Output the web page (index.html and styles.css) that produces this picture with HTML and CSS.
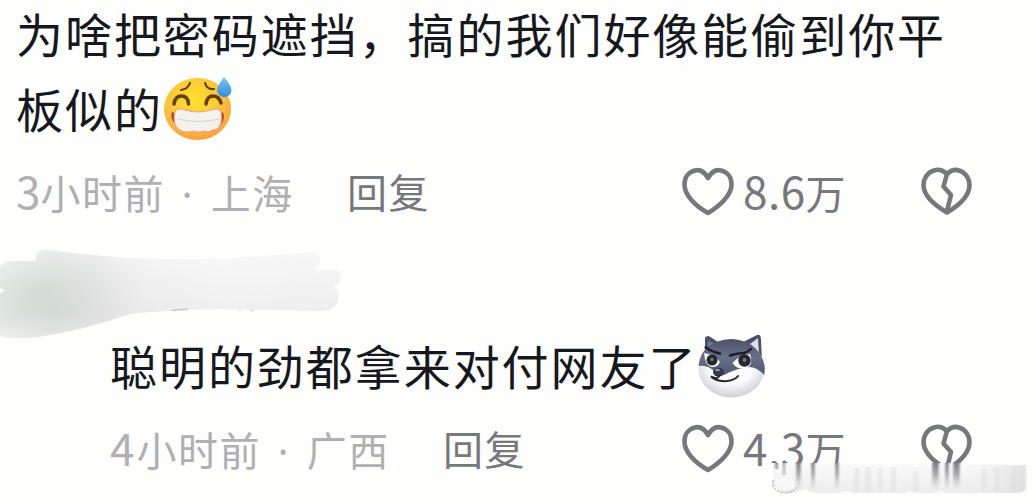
FILE: index.html
```html
<!DOCTYPE html>
<html lang="zh-CN">
  <head>
    <meta charset="UTF-8" />
    <meta name="viewport" content="width=device-width, initial-scale=1.0" />
    <title>评论</title>
    <link rel="stylesheet" href="styles.css">
  </head>
  <body>
    <!-- shared icons -->
    <svg width="0" height="0" class="defs">
      <symbol id="heart" viewBox="0 0 52 50">
        <path d="M26 11C22 4 17 2.500 13 3.500C6 5 2.500 11 2.500 17.500C2.500 28 13 39 26 46C38 39 49.500 28 49.500 17.500C49.500 11 46 5 39 3.500C35 2.500 30 4 26 11Z" />
      </symbol>
      <symbol id="broken" viewBox="0 0 52 50">
        <path d="M26 7C22 3 17 2 13 3.500C6 5.500 2.500 12 2.500 18C2.500 29 15 39 26 45.500C37 39 48.500 29 48.500 18C48.500 12 45 5.500 38 3.500C34 2 30 3 26 7Z" />
        <path d="M26 7L22.500 19.500L30 28L26 44" />
      </symbol>
    </svg>

    <main class="comments">
      <section class="comment">
        <p class="text">为啥把密码遮挡，搞的我们好像能偷到你平<br>板似的<svg class="emoji sweat" viewBox="0 0 70 66">
            <defs>
              <radialGradient id="face" cx="45%" cy="35%" r="65%">
                <stop offset="0" stop-color="#ffe02e" />
                <stop offset=".6" stop-color="#fdc63c" />
                <stop offset="1" stop-color="#f8a23e" />
              </radialGradient>
              <linearGradient id="drop" x1="0" y1="0" x2="0" y2="1">
                <stop offset="0" stop-color="#76c7f3" />
                <stop offset="1" stop-color="#318ddd" />
              </linearGradient>
            </defs>
            <ellipse cx="34.500" cy="33" rx="33.500" ry="31" fill="url(#face)" />
            <g fill="none" stroke="#654006" stroke-linecap="round">
              <path d="M18 14Q25 13 27 7M42 7Q44 14 51 13" stroke-width="2.200" />
              <path d="M11 28Q12 20 18.500 20Q25 20 25.500 28M43 28Q44 20 50 20Q56 20 58 27" stroke-width="3.500" />
            </g>
            <path d="M9 36Q7 42 12 48L20 53L50 53Q58 51 60 45Q62 38 59 36L50 42L20 42Z" fill="#a83c1f" />
            <path d="M13 34Q17 32 22 34Q29 36 35 36Q42 36 48 34Q56 31 58 36Q59 41 58 47Q56 54 50 54Q45 57 41 55Q35 57 30 55Q24 57 19 55Q14 54 12 48Q10 39 13 34Z" fill="#f3f2ed" stroke="#f5a08a" stroke-width="1.200" />
            <path d="M15 43Q35 48 56 43" fill="none" stroke="#d5d6d2" stroke-width="1.200" />
            <path d="M61 1Q54 10 54 14A7.200 7.200 0 0 0 68.500 14Q68 9 61 1Z" fill="url(#drop)" />
          </svg></p>
        <div class="meta">
          <span class="time"><span class="num">3</span>小时前 <span class="dot">·</span> 上海</span>
          <span class="reply">回复</span>
          <span class="like">
            <svg class="icon"><use href="#heart" /></svg>
            <span class="count"><span class="num">8.6</span>万</span>
          </span>
          <svg class="icon"><use href="#broken" /></svg>
        </div>
      </section>

      <!-- smudged user name -->
      <svg class="smudge" viewBox="0 0 345 95">
        <defs>
          <linearGradient id="paint">
            <stop offset="0" stop-color="#e1e8e1" />
            <stop offset=".15" stop-color="#d4dad6" />
            <stop offset=".25" stop-color="#dadcdb" />
            <stop offset=".42" stop-color="#ededed" />
            <stop offset=".65" stop-color="#f2f2f2" />
            <stop offset="1" stop-color="#f0f0f0" />
          </linearGradient>
          <linearGradient id="shade" x1="0" y1="0" x2="0" y2="1">
            <stop offset="0" stop-color="#fff" stop-opacity=".5" />
            <stop offset=".4" stop-color="#fff" stop-opacity=".1" />
            <stop offset=".7" stop-color="#ddd" stop-opacity=".15" />
            <stop offset="1" stop-color="#fff" stop-opacity=".4" />
          </linearGradient>
          <radialGradient id="tint">
            <stop offset="0" stop-color="#cbd9cd" stop-opacity=".8" />
            <stop offset="1" stop-color="#d5ddd6" stop-opacity="0" />
          </radialGradient>
          <path id="stroke" d="M0 19Q4 13 12 13H36V9Q38 1 46 2Q110 10 160 11Q230 12 312 4Q320 4 321 12Q319 18 312 22H335Q341 24 341 30Q340 37 333 38Q339 42 338 51Q337 62 322 63L220 61Q165 62 130 66Q90 80 45 88Q15 92 0 88V46L5 42L0 40Z" />
        </defs>
        <use href="#stroke" fill="url(#paint)" />
        <clipPath id="edge"><use href="#stroke" /></clipPath>
        <ellipse cx="40" cy="46" rx="60" ry="42" fill="url(#tint)" clip-path="url(#edge)" />
        <use href="#stroke" fill="url(#shade)" />
        <path d="M172 62.500L188 61" stroke="#b8b8b8" stroke-width="1.200" />
        <path d="M239 62.500H241M250 62.500H253" stroke="#ccc" />
      </svg>

      <section class="comment nested">
        <p class="text">聪明的劲都拿来对付网友了<svg class="emoji husky" viewBox="0 0 70 68">
            <defs>
              <linearGradient id="fur" x1="0" y1="0" x2="0" y2="1">
                <stop offset="0" stop-color="#4d5168" />
                <stop offset=".5" stop-color="#686f89" />
                <stop offset="1" stop-color="#505873" />
              </linearGradient>
              <radialGradient id="muzzle" cx="50%" cy="40%" r="60%">
                <stop offset=".6" stop-color="#fbfbfd" />
                <stop offset="1" stop-color="#d0cfd7" />
              </radialGradient>
            </defs>
            <path d="M8 30V6Q10 2 15 6L24 12M46 10L60 3Q64 2 64 8L65 31" fill="#4b506a" />
            <path d="M53 12L61 6L62 22Z" fill="#e0dee9" />
            <path d="M11 19V9L17 11Z" fill="#777990" />
            <ellipse cx="34.500" cy="36.500" rx="33" ry="29" fill="url(#muzzle)" />
            <path d="M1.500 34Q4 9 34 7Q58 8 66 28Q69 35 67 43Q60 35 52 35Q40 36 27 43Q19 44 16 38Q9 33 1.500 34Z" fill="url(#fur)" />
            <path d="M7 21Q18 23 23 30Q21 35 15 35Q8 34 7 21ZM35.500 31Q42 23 53 22Q57 35 47 36.500Q39 37 35.500 31Z" fill="#fafafa" />
            <circle cx="15" cy="28" r="5.500" fill="#252828" />
            <circle cx="47.500" cy="28.500" r="6.200" fill="#252828" />
            <circle cx="15" cy="27.500" r="1.700" fill="#777d7b" />
            <circle cx="47.500" cy="28" r="1.900" fill="#777d7b" />
            <path d="M8.500 15.500Q15 20 23 21.500M33 23.500Q41 21 47 21Q51 20 54 17" fill="none" stroke="#1e1c28" stroke-width="2.400" stroke-linecap="round" />
            <ellipse cx="21.500" cy="40" rx="5.500" ry="4.500" fill="#35384d" />
            <ellipse cx="20.500" cy="38" rx="2.500" ry="1.300" fill="#9296a7" />
            <path d="M22 44Q21 48 14 44.500Q20 50 30 49Q38 48 41 44" fill="none" stroke="#222029" stroke-width="2" stroke-linecap="round" />
          </svg></p>
        <div class="meta">
          <span class="time"><span class="num">4</span>小时前 <span class="dot">·</span> 广西</span>
          <span class="reply">回复</span>
          <span class="like">
            <svg class="icon"><use href="#heart" /></svg>
            <span class="count"><span class="num">4.3</span>万</span>
          </span>
          <svg class="icon"><use href="#broken" /></svg>
        </div>
      </section>
    </main>

    <!-- smeared strip over the bottom right corner -->
    <svg class="smear" viewBox="0 0 266 42">
      <defs>
        <linearGradient id="fade" x1="0" y1="0" x2="0" y2="1">
          <stop offset="0" stop-color="#fbfbfb" />
          <stop offset="1" stop-color="#ececec" />
        </linearGradient>
        <linearGradient id="streak" x1="0" y1="0" x2="0" y2="1">
          <stop offset="0" stop-color="#77787c" />
          <stop offset=".5" stop-color="#b4b4b7" />
          <stop offset="1" stop-color="#e5e5e5" stop-opacity=".2" />
        </linearGradient>
        <linearGradient id="tail">
          <stop offset="0" stop-color="#eee" stop-opacity="0" />
          <stop offset="1" stop-color="#d8d8d8" />
        </linearGradient>
        <filter id="soft" x="-10%" y="-5%" width="120%" height="110%">
          <feGaussianBlur stdDeviation="1.200 .4" />
        </filter>
      </defs>
      <path d="M0 0H266V42H0Z" fill="#fefefc" />
      <g filter="url(#soft)">
        <path d="M3 1H256V26Q252 31 246 30H181Q174 31 170 27Q166 31 158 30H150Q144 31 140 27Q136 31 130 30H82Q76 26 69 30H48Q41 30 35 26Q26 32 10 29L3 22Z" fill="url(#fade)" />
        <path d="M190 2H256V27Q250 30 240 30H190Z" fill="url(#tail)" opacity=".7" />
        <path d="M84 5H89V29H84ZM95 4H101V29H95ZM108 5H112V29H108ZM121 4H126V29H121ZM143 8H148V28H143ZM212 5H216V29H212ZM225 5H229V29H225ZM241 4H246V29H241Z" fill="#ddd" opacity=".5" />
        <path d="M5 -2H8V6H5ZM13 -2H15V12H13ZM26 -2H31V26H26ZM41 -2H45V28H41ZM65 -2H69V28H65ZM162 -2H169V28H162ZM175 -2H179V28H175ZM183 -2H190V28H183Z" fill="url(#streak)" />
      </g>
      <path d="M3 17V23Q6 29 15 30Q24 29 27 24" fill="none" stroke="#999" stroke-width=".8" stroke-dasharray="3 1" />
      <path d="M5 16H24V25Q15 29 6 24Z" fill="#fff" opacity=".6" />
    </svg>
  </body>
</html>
```
FILE: styles.css
```css
body {
  margin: 0;
  width: 1036px;
  height: 504px;
  overflow: hidden;
  position: relative;
  background: #fefefc;
  font-family: "Noto Sans CJK SC", sans-serif;
}

.defs {
  position: absolute;
}

.comments {
  display: flex;
  flex-direction: column;
  margin-top: -5px;
}

.comment {
  padding: 0 63px 0 16px;
}

.nested {
  padding-left: 110px;
}

.text {
  margin: 0;
  color: #161820;
  font-size: 47px;
  line-height: 75px;
  letter-spacing: 1.95px;
  white-space: nowrap;
}

.emoji {
  width: 70px;
  height: 66px;
  margin: -10px 0;
  vertical-align: -4px;
  overflow: visible;
}

.husky {
  height: 68px;
  vertical-align: -5px;
}

/* time, reply, likes */
.meta {
  display: flex;
  align-items: center;
  height: 94px;
  color: #77787c;
  font-size: 40px;
  line-height: 60px;
  letter-spacing: 1.5px;
  white-space: nowrap;
}

.time,
.reply,
.count {
  margin-top: -2px;
}

.time {
  width: 331px;
  color: #b0b0b2;
}

.nested .time {
  width: 333px;
}

.num {
  font-size: 44px;
  letter-spacing: 0;
}

.nested .time .num {
  letter-spacing: 2px;
}

.dot {
  display: inline-block;
  width: 25px;
  font-family: "Noto Sans", sans-serif;
  line-height: 1;
  text-align: center;
}

.like {
  display: flex;
  align-items: center;
  gap: 9px;
  margin-left: auto;
  width: 239px;
}

.count {
  letter-spacing: 0;
}

.count .num {
  letter-spacing: 0.5px;
}

.icon {
  width: 52px;
  height: 50px;
  flex: none;
  fill: none;
  stroke: #77787c;
  stroke-width: 4.6;
  stroke-linejoin: round;
}

.smudge {
  width: 345px;
  height: 95px;
  margin-top: 9px;
  margin-bottom: -16px;
}

.smear {
  position: absolute;
  left: 770px;
  top: 463px;
  width: 266px;
  height: 42px;
}
```
